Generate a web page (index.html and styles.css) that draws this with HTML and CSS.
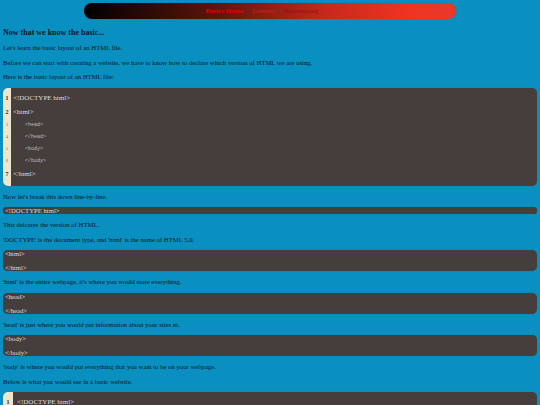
FILE: index.html
```html
<!DOCTYPE html>
<html>
<head>
<meta charset="utf-8">
<link rel="stylesheet" href="styles.css">
</head>
<body>
<nav class="nav">
  <a class="nav-link active">Basics Home</a>
  <a class="nav-link faint">Lessons</a>
  <a class="nav-link dark">Referencing</a>
</nav>
<h3 class="title">Now that we know the basic...</h3>
<p>Let's learn the basic layout of an HTML file.</p>
<p>Before we can start with creating a website, we have to know how to declare which version of HTML we are using.</p>
<p>Here is the basic layout of an HTML file:</p>
<div class="code">
  <span class="num big">1</span><span class="line big">&lt;!DOCTYPE html&gt;</span>
  <span class="num big">2</span><span class="line big">&lt;html&gt;</span>
  <span class="num small">3</span><span class="line small indent">&lt;head&gt;</span>
  <span class="num small">4</span><span class="line small indent">&lt;/head&gt;</span>
  <span class="num small">5</span><span class="line small indent">&lt;body&gt;</span>
  <span class="num small">6</span><span class="line small indent">&lt;/body&gt;</span>
  <span class="num big">7</span><span class="line big">&lt;/html&gt;</span>
</div>
<p>Now let's break this down line-by-line.</p>
<div class="snip single"><p>&lt;!DOCTYPE html&gt;</p></div>
<p>This delcares the version of HTML.</p>
<p>'DOCTYPE' is the document type, and 'html' is the name of HTML 5.0.</p>
<div class="snip"><p>&lt;html&gt;</p><p>&lt;/html&gt;</p></div>
<p>'html' is the entire webpage, it's where you would store everything.</p>
<div class="snip"><p>&lt;head&gt;</p><p>&lt;/head&gt;</p></div>
<p>'head' is just where you would put information about your sites in.</p>
<div class="snip"><p>&lt;body&gt;</p><p>&lt;/body&gt;</p></div>
<p>'body' is where you would put everything that you want to be on your webpage.</p>
<p>Below is what you would see in a basic website.</p>
<div class="code wide">
  <span class="num big">1</span><span class="line big">&lt;!DOCTYPE html&gt;</span>
  <span class="num big">2</span><span class="line big">&lt;html&gt;</span>
</div>
</body>
</html>
```
FILE: styles.css
```css
html { background: #0a90c0; }
body {
  margin: 0 3px;
  background: #0a90c0;
  font-family: "Liberation Serif", "Times New Roman", serif;
  font-size: 6.7px;
  color: #0c1620;
}
.nav {
  display: flex;
  justify-content: center;
  align-items: center;
  gap: 9px;
  width: 372px;
  height: 16px;
  margin: 3px auto 0;
  padding-right: 16px;
  box-sizing: border-box;
  border-radius: 8px;
  background: linear-gradient(to right, #000 0%, #5a150c 35%, #c8281c 65%, #f03424 88%, #e8382a 100%);
  box-shadow: 0 0 1px rgba(0,0,0,0.4);
}
.nav-link { font-size: 7px; line-height: 8px; }
.active { color: #e00000; font-weight: bold; }
.faint { color: #c82a1c; }
.dark { color: #9a0a0a; }
.title {
  font-size: 8px;
  font-weight: bold;
  margin: 9px 0 7px;
  line-height: 9px;
}
p { margin: 7px 0; line-height: 7.5px; }
.code {
  display: grid;
  grid-template-columns: 8px 1fr;
  margin: 7px 0;
  padding: 3px 0 5px;
  border-radius: 5px;
  background: linear-gradient(to right, #efe6cd 8px, #463d3d 8px);
  color: #dcdcdc;
  box-shadow: 0 0 1px rgba(0,0,0,0.3);
}
.num {
  color: #2b2b2b;
  text-align: center;
  display: flex;
  align-items: center;
  justify-content: center;
}
.line { display: flex; align-items: center; padding-left: 2px; }
.big { height: 14px; font-size: 7px; }
.num.big { font-size: 6px; font-weight: bold; }
.small { height: 12px; }
.num.small { font-size: 4px; color: #555; }
.line.small { font-family: "Liberation Mono", "Courier New", monospace; font-size: 5px; color: #bdbdbd; }
.indent { padding-left: 14px; }
.wide { grid-template-columns: 10px 1fr; background: linear-gradient(to right, #efe6cd 10px, #463d3d 10px); }
.wide .line { padding-left: 4px; }
.snip {
  background: #463d3d;
  border-radius: 5px;
  color: #dcdcdc;
  padding: 0 2px;
  box-shadow: 0 0 1px rgba(0,0,0,0.3);
}
.snip p { line-height: 7px; }
.single { border-radius: 4px; }
```
